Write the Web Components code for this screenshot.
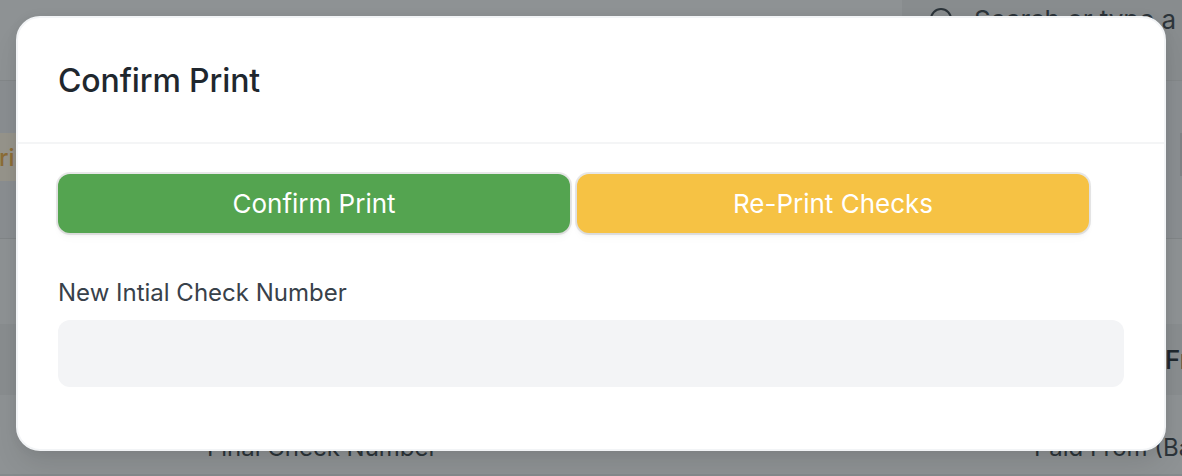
<!DOCTYPE html>
<html lang="en">
<head>
<meta charset="utf-8">
<title>Confirm Print</title>
<style>
html,body{margin:0;height:100%;overflow:hidden}
body{font-family:Inter,"Liberation Sans",sans-serif;color:#1f272e}
</style>
</head>
<body>
<desk-page></desk-page>
<print-dialog heading="Confirm Print">
  <action-button tone="green">Confirm Print</action-button>
  <action-button tone="amber">Re-Print Checks</action-button>
  <text-field slot="fields" label="New Intial Check Number"></text-field>
</print-dialog>
<script>
class Base extends HTMLElement{
  constructor(){super();this.attachShadow({mode:'open'}).innerHTML=this.view();}
  view(){return '';}
}
customElements.define('desk-page',class extends Base{view(){return `<style>
:host{display:grid;grid-template-rows:81px 158px 85px 71px 79px 2px;width:1182px;height:476px;overflow:hidden;background:#8e9294;color:#2c343a;font-size:26px;line-height:32px;white-space:nowrap}
div{box-sizing:border-box;display:flex;min-width:0;overflow:hidden}
.nav{justify-content:flex-end;border-bottom:1px solid #838789}
.search{width:280px;height:80px;background:#888c8e;padding:4px 0 0 26px;gap:18px;letter-spacing:-.06px}
svg{flex:none;margin-top:2px}
.head{background:#8a8e91;border-bottom:1px solid #818587;padding-top:52px;justify-content:space-between}
.pill{width:60px;height:48px;background:#96948b;color:#8c6c36;padding-top:9px;font-weight:500;font-size:24px;text-indent:-1px}
.button{width:2px;height:43px;background:#7e8285}
.th{background:#898d8f;justify-content:flex-end;align-items:center;font-weight:500;color:#20282e}
.th span{width:17px}
.row{padding:37px 0 0 207px;font-size:24px}
.row span:first-child{width:827px;flex:none}
.line{background:#858a8c}
</style><div class="nav"><div class="search"><svg width="28" height="28" viewBox="0 0 28 28" fill="none" stroke="#2c343a" stroke-width="2"><circle cx="13" cy="13" r="10"/><path d="m20 20 6 6"/></svg><span>Search or type a</span></div></div><div class="head"><div class="pill">rin</div><div class="button"></div></div><div></div><div class="th"><span>Fr</span></div><div class="row"><span>Final Check Number</span><span>Paid From (Ba</span></div><div class="line"></div>`}});
customElements.define('print-dialog',class extends Base{view(){return `<style>
:host{position:absolute;left:16px;top:16px;width:1150px;height:435px;box-sizing:border-box;border:2px solid #f2f4f6;border-radius:24px;background:#fff;box-shadow:0 16px 28px -4px rgba(0,0,0,.1),0 0 12px rgba(0,0,0,.05);display:flex;flex-direction:column}
header{height:126px;box-sizing:border-box;border-bottom:2px solid #f4f5f6;padding:2px 40px 0;display:flex;align-items:center;flex:none}
h2{margin:0;font-size:32px;line-height:40px;font-weight:500;letter-spacing:-.12px;color:#1f272e}
main{padding:30px 40px 0;display:flex;flex-direction:column}
.actions{display:flex;gap:7px;margin-bottom:42px}
</style><header><h2></h2></header><main><div class="actions"><slot></slot></div><slot name="fields"></slot></main>`}
connectedCallback(){this.shadowRoot.querySelector('h2').textContent=this.getAttribute('heading');}});
customElements.define('action-button',class extends Base{view(){return `<style>
:host{display:block;width:512px}
:host([tone=green]){--tone:#54a450}:host([tone=amber]){--tone:#f6c244}
button{display:block;width:100%;height:59px;border:0;border-radius:12px;padding:0;background:var(--tone);color:#fff;font:385 26px/36px Inter,"Liberation Sans",sans-serif;letter-spacing:0;box-shadow:0 0 0 2px rgba(0,0,0,.09),0 2px 4px rgba(0,0,0,.06),0 6px 8px rgba(0,0,0,.02)}
</style><button><slot></slot></button>`}});
customElements.define('text-field',class extends Base{view(){return `<style>
:host{display:flex;flex-direction:column;gap:9px}
label{font-size:24px;line-height:36px;color:#38414a}
input{display:block;box-sizing:border-box;width:1066px;height:67px;border:0;border-radius:12px;background:#f3f4f6;padding:0 20px;font:26px Inter,sans-serif;color:#1f272e}
</style><label for="value"></label><input id="value">`}
connectedCallback(){this.shadowRoot.querySelector('label').textContent=this.getAttribute('label');}});
</script>
</body>
</html>
